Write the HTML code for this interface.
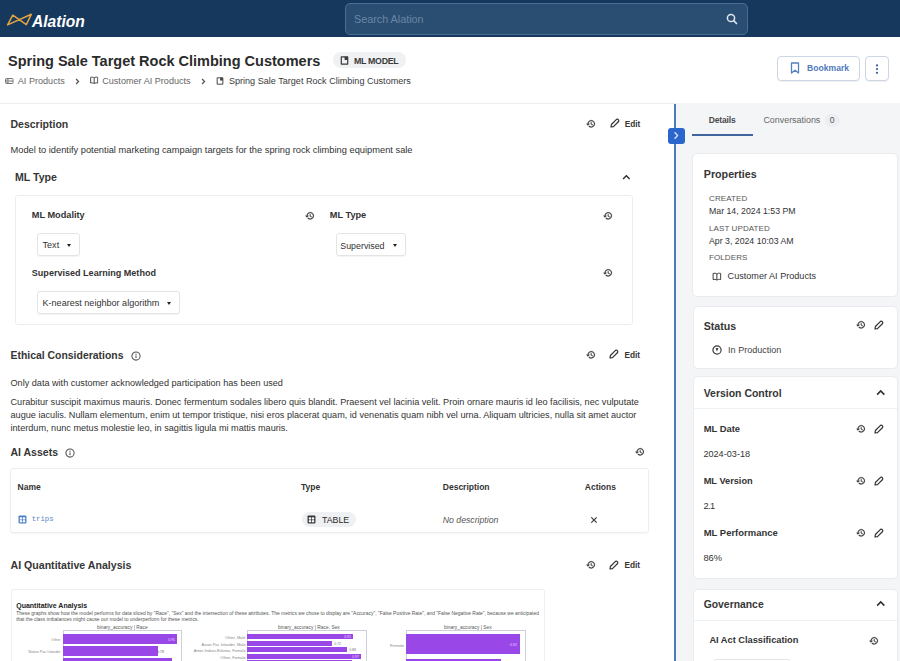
<!DOCTYPE html>
<html><head><meta charset="utf-8">
<style>
*{box-sizing:border-box;margin:0;padding:0}
html,body{width:900px;height:661px;overflow:hidden;background:#fff;font-family:"Liberation Sans",sans-serif;color:#2c2c2c}
.a{position:absolute;white-space:nowrap;line-height:1}
svg.i{position:absolute;display:block;overflow:visible}
.caret{position:absolute;width:0;height:0;border-left:2.7px solid transparent;border-right:2.7px solid transparent;border-top:3.2px solid #222}
</style></head><body>
<svg width="0" height="0" style="position:absolute">
<defs>
<symbol id="hist" viewBox="0 0 24 24"><path fill="currentColor" stroke="currentColor" stroke-width="0.7" d="M13 3c-4.97 0-9 4.03-9 9H1l3.89 3.89.07.14L9 12H6c0-3.87 3.13-7 7-7s7 3.13 7 7-3.13 7-7 7c-1.93 0-3.68-.79-4.94-2.06l-1.42 1.42C8.27 19.99 10.51 21 13 21c4.97 0 9-4.03 9-9s-4.03-9-9-9zm-1 5v5l4.28 2.54.72-1.21-3.5-2.08V8H12z"/></symbol>
<symbol id="pen" viewBox="0 0 10 10"><path d="M1 9 L1.4 6.5 L6.5 1.4 A1.55 1.55 0 0 1 8.6 3.5 L3.5 8.6 Z" fill="none" stroke="#333" stroke-width="1.2" stroke-linejoin="round"/></symbol>
<symbol id="chev" viewBox="0 0 10 10"><path d="M1.2 7 L5 3.1 L8.8 7" fill="none" stroke="#2e2e2e" stroke-width="1.6"/></symbol>
<symbol id="info" viewBox="0 0 10 10"><circle cx="5" cy="5" r="4.1" fill="none" stroke="#555" stroke-width="1.05"/><path d="M5 4.6 V7" stroke="#555" stroke-width="1.1"/><circle cx="5" cy="3.2" r="0.65" fill="#555"/></symbol>
<symbol id="doc" viewBox="0 0 9 9"><path d="M1.3 0.9 H7.7 V8.1 H1.3 Z" fill="none" stroke="#444" stroke-width="1.1" stroke-linejoin="round"/><rect x="4.6" y="0.9" width="3.1" height="3.1" fill="#444"/></symbol>
<symbol id="book" viewBox="0 0 10 10"><path d="M5 2.2 C3.8 1.3 2.3 1.2 0.8 1.6 V8.4 C2.3 8 3.8 8.1 5 9 C6.2 8.1 7.7 8 9.2 8.4 V1.6 C7.7 1.2 6.2 1.3 5 2.2 Z M5 2.2 V9" fill="none" stroke="#3a3a3a" stroke-width="1.1" stroke-linejoin="round"/></symbol>
<symbol id="grid" viewBox="0 0 10 10"><rect x="0.6" y="0.6" width="8.8" height="8.8" rx="1.2" fill="currentColor"/><rect x="2" y="2.6" width="2.6" height="2.4" fill="#fff"/><rect x="5.4" y="2.6" width="2.6" height="2.4" fill="#fff"/><rect x="2" y="5.8" width="2.6" height="2.3" fill="#fff"/><rect x="5.4" y="5.8" width="2.6" height="2.3" fill="#fff"/></symbol>
</defs></svg>

<div class="a" style="left:0px;top:0px;width:900px;height:37px;background:#17385d"></div>
<div class="a" style="left:345px;top:3px;width:403px;height:32px;background:#2a4e72;border:1px solid #4a6d93;border-radius:5px"></div>
<div class="a" style="left:354px;top:13.8px;font-size:10.8px;color:#6b86a4;">Search Alation</div>
<svg class="i" style="left:726px;top:12.5px" width="12" height="12" viewBox="0 0 12 12"><circle cx="5" cy="5" r="3.6" fill="none" stroke="#dfe6ee" stroke-width="1.5"/><line x1="7.7" y1="7.7" x2="10.5" y2="10.5" stroke="#dfe6ee" stroke-width="1.7" stroke-linecap="round"/></svg>
<svg class="i" style="left:0;top:0" width="40" height="37" viewBox="0 0 40 37"><path d="M7.6 24.9 L12.8 15.2 L26.3 24.6 L31.3 14.3 Z" fill="none" stroke="#e4a43f" stroke-width="1.5" stroke-linejoin="round"/></svg>
<div class="a" style="left:32px;top:13.5px;font-size:15.6px;color:#fff;font-weight:bold;font-style:italic;">Alation</div>
<div class="a" style="left:8px;top:53.63px;font-size:14.5px;color:#2b2b2b;font-weight:bold;">Spring Sale Target Rock Climbing Customers</div>
<div class="a" style="left:333px;top:51.5px;width:72.5px;height:16.3px;background:#f0f1f3;border-radius:8px"></div>
<svg class="i" style="left:339.5px;top:55.5px" width="9" height="9" viewBox="0 0 9 9"><path d="M1.3 0.9 H7.7 V8.1 H1.3 Z" fill="none" stroke="#3a3a3a" stroke-width="1.2" stroke-linejoin="round"/><rect x="4.6" y="0.9" width="3.1" height="3.1" fill="#3a3a3a"/></svg>
<div class="a" style="left:354px;top:56.95px;font-size:8.8px;color:#3a3a3a;font-weight:bold;letter-spacing:-0.3px;">ML MODEL</div>
<svg class="i" style="left:4.5px;top:77.5px" width="8.5" height="6" viewBox="0 0 8.5 6"><rect x="0.5" y="0.5" width="7.5" height="5" rx="0.8" fill="none" stroke="#777" stroke-width="1"/><path d="M0.5 3 H8" stroke="#777" stroke-width="1"/><rect x="1.5" y="1.3" width="2.2" height="1.2" fill="#777"/><rect x="1.5" y="3.6" width="2.2" height="1.2" fill="#777"/></svg>
<div class="a" style="left:17.8px;top:76.5px;font-size:9.1px;color:#666;">AI Products</div>
<svg class="i" style="left:74px;top:77.5px" width="7" height="7" viewBox="0 0 10 10"><path d="M3 1.5 L6.5 5 L3 8.5" fill="none" stroke="#555" stroke-width="1.8"/></svg>
<svg class="i" style="left:89.8px;top:76.3px" width="8.4" height="8.4"><use href="#book"/></svg>
<div class="a" style="left:102.2px;top:76.5px;font-size:9.1px;color:#666;">Customer AI Products</div>
<svg class="i" style="left:199.5px;top:77.5px" width="7" height="7" viewBox="0 0 10 10"><path d="M3 1.5 L6.5 5 L3 8.5" fill="none" stroke="#555" stroke-width="1.8"/></svg>
<svg class="i" style="left:216px;top:76.5px" width="8" height="8"><use href="#doc"/></svg>
<div class="a" style="left:228.9px;top:76.51px;font-size:9.08px;color:#3a3a3a;">Spring Sale Target Rock Climbing Customers</div>
<div class="a" style="left:777px;top:56px;width:83px;height:25px;border:1px solid #cbd5e4;border-radius:4px;box-shadow:0 1px 1px rgba(0,0,0,.06)"></div>
<svg class="i" style="left:789.5px;top:62px" width="10" height="12" viewBox="0 0 10 12"><path d="M1.5 1 H8.5 V11 L5 8.2 L1.5 11 Z" fill="none" stroke="#5580c0" stroke-width="1.3" stroke-linejoin="round"/></svg>
<div class="a" style="left:807px;top:64.22px;font-size:8.6px;color:#4f7bbd;font-weight:bold;">Bookmark</div>
<div class="a" style="left:865px;top:56px;width:24px;height:25px;border:1px solid #cbd5e4;border-radius:4px;box-shadow:0 1px 1px rgba(0,0,0,.06)"></div>
<svg class="i" style="left:875px;top:63.5px" width="4" height="11" viewBox="0 0 4 11"><circle cx="2" cy="1.4" r="1.15" fill="#45679a"/><circle cx="2" cy="5.1" r="1.15" fill="#45679a"/><circle cx="2" cy="8.8" r="1.15" fill="#45679a"/></svg>
<div class="a" style="left:0px;top:102.5px;width:676px;height:1px;background:#eceef1"></div>
<div class="a" style="left:10.5px;top:118.61px;font-size:10.5px;color:#363636;font-weight:bold;">Description</div>
<svg class="i" style="left:586.35px;top:119.20px;color:#333" width="9.7" height="9.7" viewBox="0 0 24 24"><use href="#hist"/></svg>
<svg class="i" style="left:609.50px;top:118.40px" width="10" height="10" viewBox="0 0 10 10"><use href="#pen"/></svg>
<div class="a" style="left:624.7px;top:119.67px;font-size:8.3px;color:#363636;font-weight:bold;">Edit</div>
<div class="a" style="left:10.5px;top:146.33px;font-size:9.3px;color:#333;">Model to identify potential marketing campaign targets for the spring rock climbing equipment sale</div>
<div class="a" style="left:15px;top:172.03px;font-size:10.6px;color:#363636;font-weight:bold;">ML Type</div>
<svg class="i" style="left:621.85px;top:172.59px" width="8.70" height="8.70" viewBox="0 0 10 10"><use href="#chev"/></svg>
<div class="a" style="left:15.2px;top:195px;width:617.6px;height:129.6px;border:1px solid #ededef;border-radius:3px"></div>
<div class="a" style="left:31.8px;top:211.21px;font-size:9.2px;color:#333;font-weight:bold;">ML Modality</div>
<svg class="i" style="left:304.95px;top:210.50px;color:#333" width="9.7" height="9.7" viewBox="0 0 24 24"><use href="#hist"/></svg>
<div class="a" style="left:37px;top:233px;width:42.7px;height:23.3px;border:1px solid #e3e4e6;border-radius:3px;box-shadow:0 1px 1px rgba(0,0,0,.05)"></div>
<div class="a" style="left:42.5px;top:241.3px;font-size:9.1px;color:#333;">Text</div>
<div class="caret" style="left:66.8px;top:243.6px"></div>
<div class="a" style="left:329.8px;top:211.21px;font-size:9.2px;color:#333;font-weight:bold;">ML Type</div>
<svg class="i" style="left:602.65px;top:210.50px;color:#333" width="9.7" height="9.7" viewBox="0 0 24 24"><use href="#hist"/></svg>
<div class="a" style="left:335.5px;top:233px;width:70px;height:23.3px;border:1px solid #e3e4e6;border-radius:3px;box-shadow:0 1px 1px rgba(0,0,0,.05)"></div>
<div class="a" style="left:340.3px;top:241.51px;font-size:8.85px;color:#333;">Supervised</div>
<div class="caret" style="left:392.8px;top:243.6px"></div>
<div class="a" style="left:31.8px;top:268.64px;font-size:9.05px;color:#333;font-weight:bold;">Supervised Learning Method</div>
<svg class="i" style="left:602.65px;top:267.90px;color:#333" width="9.7" height="9.7" viewBox="0 0 24 24"><use href="#hist"/></svg>
<div class="a" style="left:37px;top:290.6px;width:142.5px;height:23.8px;border:1px solid #e3e4e6;border-radius:3px;box-shadow:0 1px 1px rgba(0,0,0,.05)"></div>
<div class="a" style="left:42.5px;top:299.02px;font-size:9.07px;color:#333;">K-nearest neighbor algorithm</div>
<div class="caret" style="left:166.6px;top:301.6px"></div>
<div class="a" style="left:10.5px;top:350.77px;font-size:10.43px;color:#363636;font-weight:bold;">Ethical Considerations</div>
<svg class="i" style="left:131.20px;top:351.10px" width="10" height="10" viewBox="0 0 10 10"><use href="#info"/></svg>
<svg class="i" style="left:585.95px;top:350.10px;color:#333" width="9.7" height="9.7" viewBox="0 0 24 24"><use href="#hist"/></svg>
<svg class="i" style="left:609.10px;top:349.40px" width="10" height="10" viewBox="0 0 10 10"><use href="#pen"/></svg>
<div class="a" style="left:624.4px;top:350.57px;font-size:8.3px;color:#363636;font-weight:bold;">Edit</div>
<div class="a" style="left:10.5px;top:378.68px;font-size:9.12px;color:#333;">Only data with customer acknowledged participation has been used</div>
<div class="a" style="left:10.5px;top:397.57px;font-size:9.13px;color:#333;">Curabitur suscipit maximus mauris. Donec fermentum sodales libero quis blandit. Praesent vel lacinia velit. Proin ornare mauris id leo facilisis, nec vulputate</div>
<div class="a" style="left:10.5px;top:410.97px;font-size:9.13px;color:#333;">augue iaculis. Nullam elementum, enim ut tempor tristique, nisi eros placerat quam, id venenatis quam nibh vel urna. Aliquam ultricies, nulla sit amet auctor</div>
<div class="a" style="left:10.5px;top:424.37px;font-size:9.13px;color:#333;">interdum, nunc metus molestie leo, in sagittis ligula mi mattis mauris.</div>
<div class="a" style="left:10.5px;top:447.21px;font-size:10.5px;color:#363636;font-weight:bold;">AI Assets</div>
<svg class="i" style="left:65.20px;top:448.40px" width="10" height="10" viewBox="0 0 10 10"><use href="#info"/></svg>
<svg class="i" style="left:635.35px;top:447.30px;color:#333" width="9.7" height="9.7" viewBox="0 0 24 24"><use href="#hist"/></svg>
<div class="a" style="left:10px;top:467.6px;width:639px;height:65.2px;border:1px solid #eceef0;border-radius:3px;box-shadow:0 1px 2px rgba(0,0,0,.04)"></div>
<div class="a" style="left:17.6px;top:482.6px;font-size:8.5px;color:#333;font-weight:bold;">Name</div>
<div class="a" style="left:301px;top:482.6px;font-size:8.5px;color:#333;font-weight:bold;">Type</div>
<div class="a" style="left:442.8px;top:482.6px;font-size:8.5px;color:#333;font-weight:bold;">Description</div>
<div class="a" style="left:584.8px;top:482.6px;font-size:8.5px;color:#333;font-weight:bold;">Actions</div>
<svg class="i" style="left:17.7px;top:514.8px;color:#4d7fc7" width="9" height="9"><use href="#grid"/></svg>
<div class="a" style="left:31.7px;top:515.7px;font-size:7.3px;color:#5b86c4;font-family:'Liberation Mono',monospace;">trips</div>
<div class="a" style="left:302px;top:511.5px;width:54px;height:15px;background:#eef0f2;border-radius:8px"></div>
<svg class="i" style="left:307px;top:514.5px;color:#333" width="9" height="9"><use href="#grid"/></svg>
<div class="a" style="left:322px;top:515.55px;font-size:8.8px;color:#2a2a2a;">TABLE</div>
<div class="a" style="left:442.8px;top:515.54px;font-size:8.7px;color:#555;font-style:italic;">No description</div>
<svg class="i" style="left:589.7px;top:515.6px" width="8" height="8" viewBox="0 0 8 8"><path d="M1.3 1.3 L6.7 6.7 M6.7 1.3 L1.3 6.7" stroke="#3a3a3a" stroke-width="1.2"/></svg>
<div class="a" style="left:10.5px;top:559.93px;font-size:10.6px;color:#363636;font-weight:bold;">AI Quantitative Analysis</div>
<svg class="i" style="left:585.95px;top:560.40px;color:#333" width="9.7" height="9.7" viewBox="0 0 24 24"><use href="#hist"/></svg>
<svg class="i" style="left:609.10px;top:559.70px" width="10" height="10" viewBox="0 0 10 10"><use href="#pen"/></svg>
<div class="a" style="left:624.4px;top:560.97px;font-size:8.3px;color:#363636;font-weight:bold;">Edit</div>
<div class="a" style="left:10.5px;top:588.5px;width:534px;height:80px;border:1px solid #efeff1;border-radius:2px;background:#fff"></div>
<div class="a" style="left:16.2px;top:602.07px;font-size:7px;color:#222;font-weight:bold;">Quantitative Analysis</div>
<div class="a" style="left:16.2px;top:612.12px;font-size:4.94px;color:#555;">These graphs show how the model performs for data sliced by "Race", "Sex" and the intersection of these attributes. The metrics we chose to display are "Accuracy", "False Positive Rate", and "False Negative Rate", because we anticipated</div>
<div class="a" style="left:16.2px;top:618.32px;font-size:4.94px;color:#555;">that the class imbalances might cause our model to underperform for these metrics.</div>
<div class="a" style="left:97px;top:625.58px;font-size:4.87px;color:#555;">binary_accuracy | Race</div>
<div class="a" style="left:63.2px;top:629.8px;width:119px;height:40px;border:0.7px solid #cdd0dc"></div>
<div class="a" style="left:63.2px;top:634.4px;width:113.5px;height:9.4px;background:#9a47e8"></div>
<div class="a" style="left:63.2px;top:646.3px;width:94.8px;height:9.3px;background:#9a47e8"></div>
<div class="a" style="left:63.2px;top:658.4px;width:108.5px;height:9.3px;background:#9a47e8"></div>
<div class="a" style="right:839.5px;top:638.75px;font-size:3.7px;color:#888">Other</div>
<div class="a" style="right:839.5px;top:650.65px;font-size:3.7px;color:#888">Native Pac Islander</div>
<div class="a" style="right:725px;top:638.85px;font-size:3.5px;color:#e8d8fa">0.95</div>
<div class="a" style="right:736px;top:650.75px;font-size:3.5px;color:#666">0.78</div>
<div class="a" style="left:278px;top:625.88px;font-size:4.87px;color:#555;">binary_accuracy | Race, Sex</div>
<div class="a" style="left:247.3px;top:630.4px;width:120px;height:40px;border:0.7px solid #cdd0dc"></div>
<div class="a" style="left:247.3px;top:634px;width:106px;height:5.3px;background:#9a47e8"></div>
<div class="a" style="left:247.3px;top:641px;width:85px;height:4.6px;background:#9a47e8"></div>
<div class="a" style="left:247.3px;top:647.3px;width:99.7px;height:4.9px;background:#9a47e8"></div>
<div class="a" style="left:247.3px;top:654px;width:113.7px;height:4.9px;background:#9a47e8"></div>
<div class="a" style="left:247.3px;top:660px;width:105px;height:4.9px;background:#9a47e8"></div>
<div class="a" style="right:654.4px;top:636.10px;font-size:4.0px;color:#888">Other, Male</div>
<div class="a" style="right:654.4px;top:642.80px;font-size:4.0px;color:#888">Asian Pac Islander, Male</div>
<div class="a" style="right:654.4px;top:649.20px;font-size:4.0px;color:#888">Amer-Indian-Eskimo, Female</div>
<div class="a" style="right:654.4px;top:655.90px;font-size:4.0px;color:#888">Other, Female</div>
<div class="a" style="right:549px;top:636.35px;font-size:3.5px;color:#e8d8fa">0.95</div>
<div class="a" style="right:559px;top:643.05px;font-size:3.5px;color:#777">0.72</div>
<div class="a" style="right:544px;top:649.45px;font-size:3.5px;color:#777">0.88</div>
<div class="a" style="right:541px;top:656.15px;font-size:3.5px;color:#e8d8fa">0.97</div>
<div class="a" style="left:444px;top:625.88px;font-size:4.87px;color:#555;">binary_accuracy | Sex</div>
<div class="a" style="left:406.3px;top:630.4px;width:120px;height:40px;border:0.7px solid #cdd0dc"></div>
<div class="a" style="left:406.3px;top:634.2px;width:114px;height:20.2px;background:#9a47e8"></div>
<div class="a" style="left:406.3px;top:659.1px;width:95.2px;height:20px;background:#9a47e8"></div>
<div class="a" style="right:496px;top:643.70px;font-size:4.2px;color:#888">Female</div>
<div class="a" style="right:383px;top:644.00px;font-size:3.6px;color:#e8d8fa">0.92</div>
<div class="a" style="left:676px;top:103px;width:224px;height:558px;background:#f4f5f7"></div>
<div class="a" style="left:673.9px;top:103.5px;width:2.1px;height:558px;background:#5079b8"></div>
<div class="a" style="left:668.3px;top:127.9px;width:16.3px;height:15.8px;background:#2b66cd;border-radius:3px"></div>
<svg class="i" style="left:671.8px;top:131px" width="8" height="9" viewBox="0 0 8 9"><path d="M2.6 1.3 L5.6 4.5 L2.6 7.7" fill="none" stroke="#dfe9fa" stroke-width="1.25"/></svg>
<div class="a" style="left:708.7px;top:116.2px;font-size:8.5px;color:#4a4a4a;font-weight:bold;letter-spacing:-0.15px;">Details</div>
<div class="a" style="left:692px;top:134.4px;width:61.3px;height:1.5px;background:#41659e"></div>
<div class="a" style="left:763.4px;top:115.85px;font-size:8.92px;color:#666;">Conversations</div>
<div class="a" style="left:825px;top:113.5px;width:15px;height:13px;background:#eceef1;border-radius:7px"></div>
<div class="a" style="left:829.8px;top:116.2px;font-size:8.5px;color:#555;">0</div>
<div class="a" style="left:691.5px;top:153.4px;width:206.5px;height:144px;border:1px solid #eaebee;border-radius:5px;background:#fff"></div>
<div class="a" style="left:703.8px;top:168.54px;font-size:10.7px;color:#363636;font-weight:bold;">Properties</div>
<div class="a" style="left:709px;top:195.43px;font-size:8px;color:#555;letter-spacing:.1px;">CREATED</div>
<div class="a" style="left:709px;top:207.19px;font-size:8.75px;color:#333;">Mar 14, 2024 1:53 PM</div>
<div class="a" style="left:709px;top:224.73px;font-size:8px;color:#555;letter-spacing:.1px;">LAST UPDATED</div>
<div class="a" style="left:709px;top:236.69px;font-size:8.75px;color:#333;">Apr 3, 2024 10:03 AM</div>
<div class="a" style="left:709px;top:254.23px;font-size:8px;color:#555;letter-spacing:.1px;">FOLDERS</div>
<svg class="i" style="left:711.7px;top:271.7px" width="9.8" height="9"><use href="#book"/></svg>
<div class="a" style="left:727.6px;top:271.9px;font-size:9.1px;color:#333;">Customer AI Products</div>
<div class="a" style="left:692.5px;top:305.5px;width:205.8px;height:63.6px;border:1px solid #eaebee;border-radius:5px;background:#fff"></div>
<div class="a" style="left:703.7px;top:321.0px;font-size:10.63px;color:#363636;font-weight:bold;">Status</div>
<svg class="i" style="left:855.65px;top:320.00px;color:#333" width="9.7" height="9.7" viewBox="0 0 24 24"><use href="#hist"/></svg>
<svg class="i" style="left:874.00px;top:320.40px" width="10" height="10" viewBox="0 0 10 10"><use href="#pen"/></svg>
<svg class="i" style="left:711.9px;top:345.2px" width="10" height="10" viewBox="0 0 10 10"><circle cx="5" cy="5" r="4.1" fill="none" stroke="#3a3a3a" stroke-width="1.2"/><path d="M3.6 3.3 Q5 2.5 6.4 3.3 L5 6.6 Z" fill="#3a3a3a"/></svg>
<div class="a" style="left:728.1px;top:345.74px;font-size:9.05px;color:#444;">In Production</div>
<div class="a" style="left:692.5px;top:376px;width:205.8px;height:203.2px;border:1px solid #eaebee;border-radius:5px;background:#fff"></div>
<div class="a" style="left:693.5px;top:408.2px;width:203px;height:1px;background:#eff0f2"></div>
<div class="a" style="left:703.7px;top:388.83px;font-size:10.48px;color:#363636;font-weight:bold;">Version Control</div>
<svg class="i" style="left:875.55px;top:387.55px" width="9.50" height="9.50" viewBox="0 0 10 10"><use href="#chev"/></svg>
<div class="a" style="left:703.7px;top:424.04px;font-size:9.4px;color:#333;font-weight:bold;">ML Date</div>
<svg class="i" style="left:855.75px;top:424.00px;color:#333" width="9.7" height="9.7" viewBox="0 0 24 24"><use href="#hist"/></svg>
<svg class="i" style="left:873.70px;top:423.90px" width="10" height="10" viewBox="0 0 10 10"><use href="#pen"/></svg>
<div class="a" style="left:703.4px;top:449.65px;font-size:9.15px;color:#333;">2024-03-18</div>
<div class="a" style="left:703.7px;top:477.4px;font-size:9.22px;color:#333;font-weight:bold;">ML Version</div>
<svg class="i" style="left:855.85px;top:475.80px;color:#333" width="9.7" height="9.7" viewBox="0 0 24 24"><use href="#hist"/></svg>
<svg class="i" style="left:873.70px;top:475.70px" width="10" height="10" viewBox="0 0 10 10"><use href="#pen"/></svg>
<div class="a" style="left:703.4px;top:502.43px;font-size:9.3px;color:#333;letter-spacing:-0.6px;">2.1</div>
<div class="a" style="left:703.7px;top:527.98px;font-size:9.47px;color:#333;font-weight:bold;">ML Performance</div>
<svg class="i" style="left:855.85px;top:527.60px;color:#333" width="9.7" height="9.7" viewBox="0 0 24 24"><use href="#hist"/></svg>
<svg class="i" style="left:873.70px;top:527.50px" width="10" height="10" viewBox="0 0 10 10"><use href="#pen"/></svg>
<div class="a" style="left:703.4px;top:554.23px;font-size:9.3px;color:#333;">86%</div>
<div class="a" style="left:692.5px;top:588.5px;width:205.8px;height:90px;border:1px solid #eaebee;border-radius:5px;background:#fff"></div>
<div class="a" style="left:693.5px;top:620.3px;width:203px;height:1px;background:#eff0f2"></div>
<div class="a" style="left:703.7px;top:599.61px;font-size:10.38px;color:#363636;font-weight:bold;">Governance</div>
<svg class="i" style="left:875.55px;top:598.75px" width="9.50" height="9.50" viewBox="0 0 10 10"><use href="#chev"/></svg>
<div class="a" style="left:709.4px;top:635.58px;font-size:9.24px;color:#333;font-weight:bold;">AI Act Classification</div>
<svg class="i" style="left:869.35px;top:635.60px;color:#333" width="9.7" height="9.7" viewBox="0 0 24 24"><use href="#hist"/></svg>
<div class="a" style="left:713px;top:658.5px;width:78px;height:20px;border:1px solid #e3e4e6;border-radius:4px;background:#fff"></div>
</body></html>
